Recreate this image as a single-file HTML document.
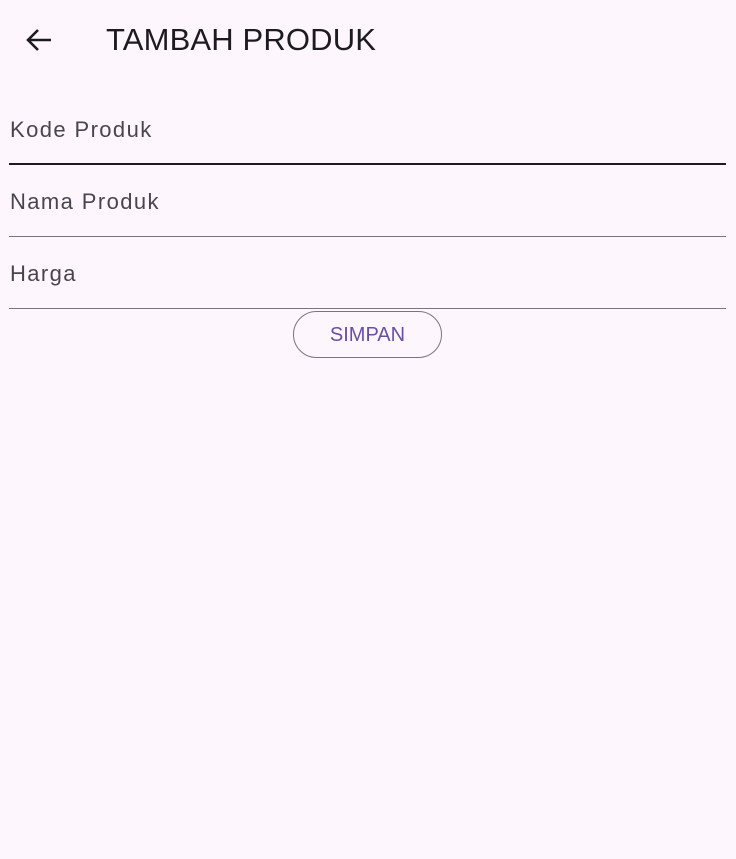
<!DOCTYPE html>
<html><head><style>
body{margin:0;width:736px;height:859px;background:#fdf7fd;font-family:"Liberation Sans",sans-serif;position:relative;overflow:hidden}
.t{position:absolute;left:106px;top:22px;font-size:31px;color:#1d1b20;letter-spacing:0.15px}
.l{position:absolute;left:10px;font-size:22px;color:#49454f;letter-spacing:1.4px}
.ln{position:absolute;left:9px;width:717px;height:1px;background:#79747e}
.btn{position:absolute;left:293px;top:311px;width:147px;height:45px;border:1px solid #79747e;border-radius:24px;color:#6750a4;font-size:20px;text-align:center;line-height:46px}
</style></head><body>
<svg style="position:absolute;left:25px;top:27px" width="28" height="26" viewBox="0 0 28 26"><path d="M26 13H3M13 3L3 13L13 23" stroke="#1d1b20" stroke-width="2.6" fill="none"/></svg>
<div class="t">TAMBAH PRODUK</div>
<div class="l" style="top:117px">Kode Produk</div>
<div class="ln" style="top:163px;height:2px;background:#1d1b20"></div>
<div class="l" style="top:189px">Nama Produk</div>
<div class="ln" style="top:236px"></div>
<div class="l" style="top:261px">Harga</div>
<div class="ln" style="top:308px"></div>
<div class="btn">SIMPAN</div>
</body></html>
